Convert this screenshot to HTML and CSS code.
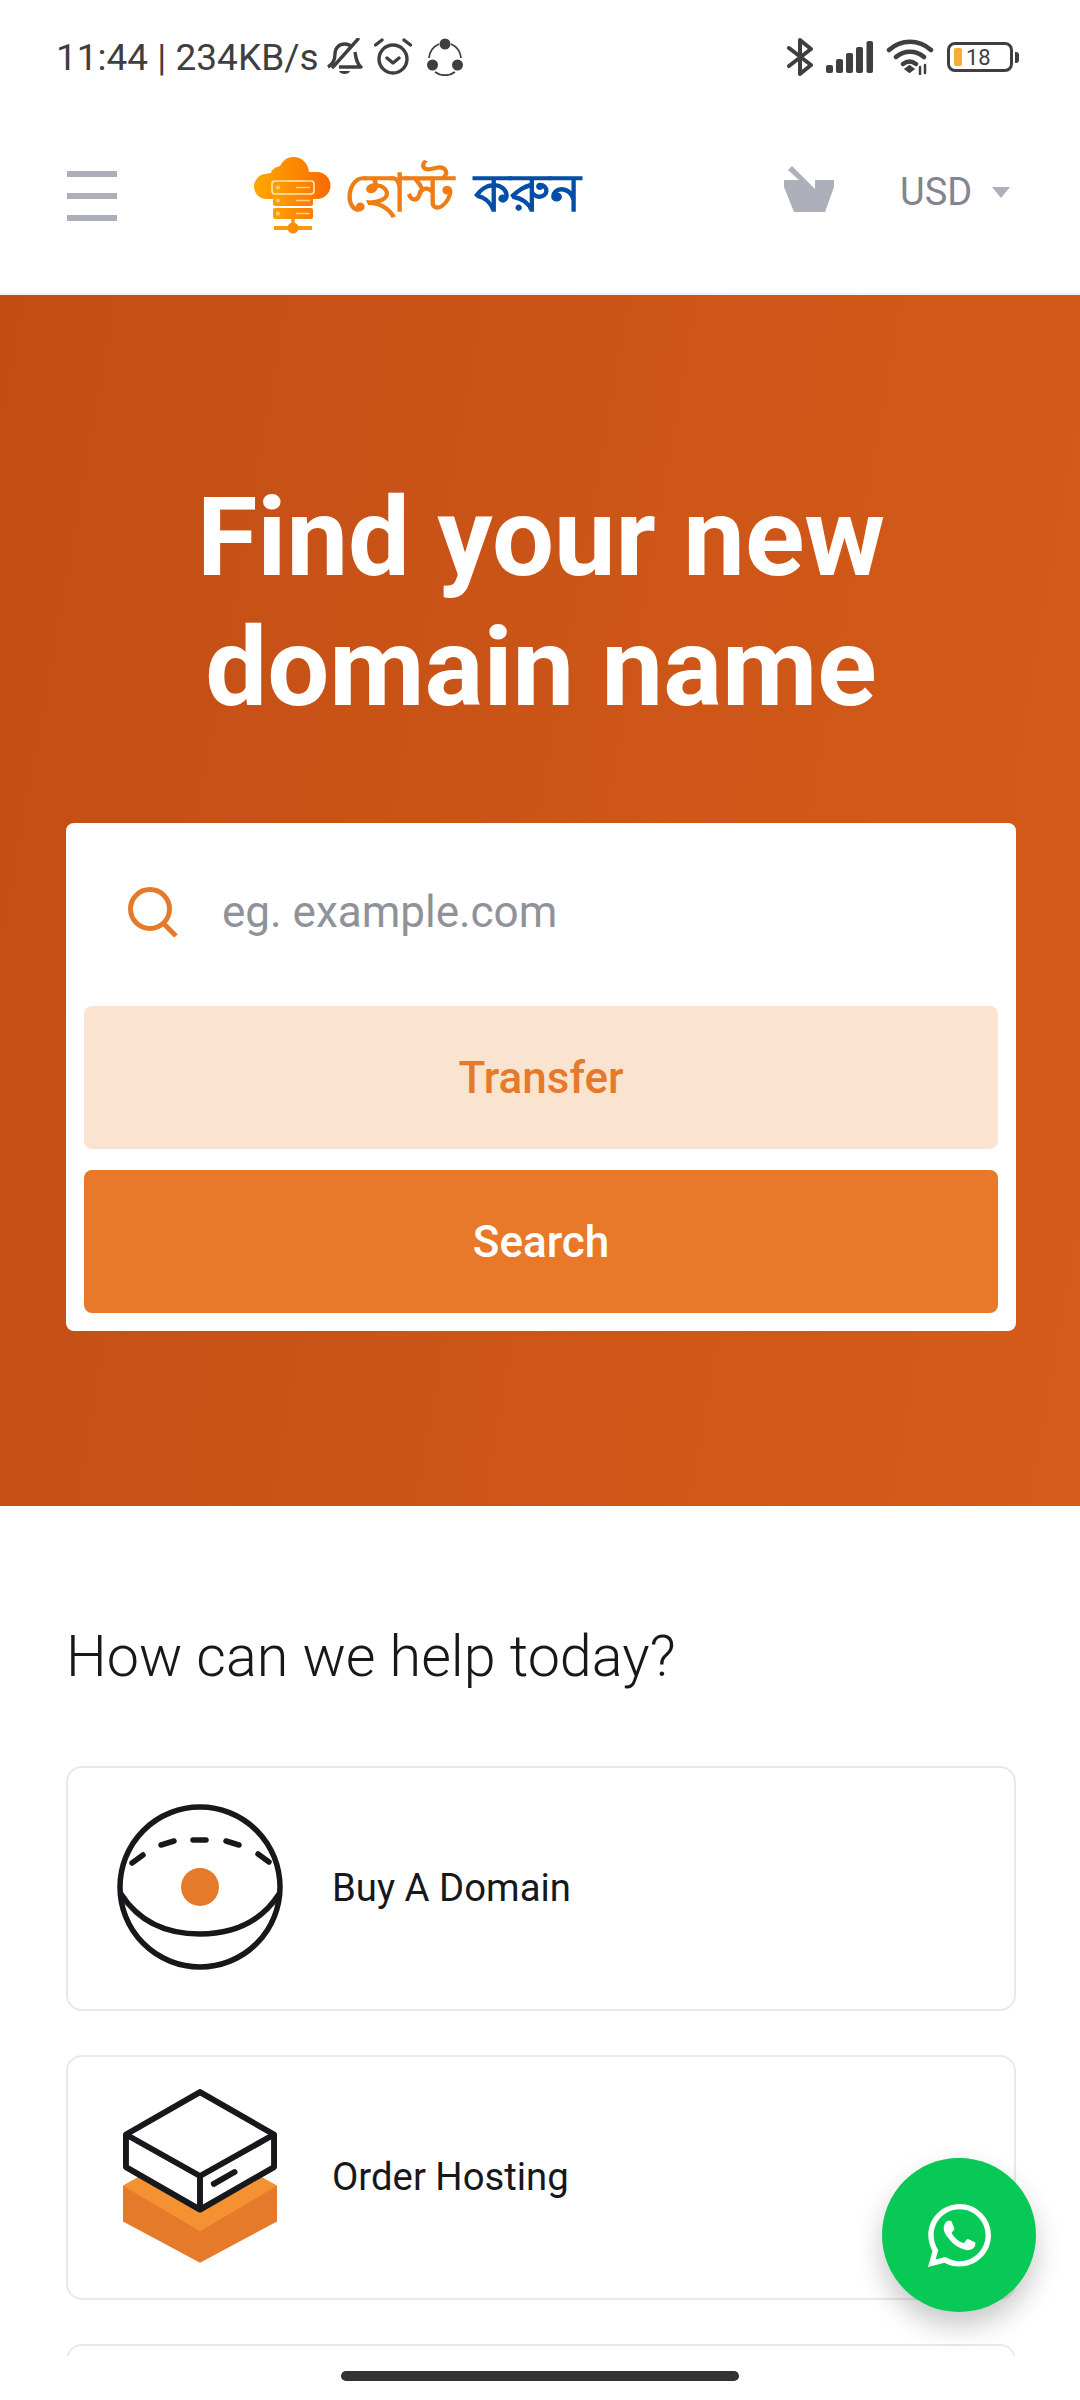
FILE: index.html
```html
<!DOCTYPE html>
<html lang="en">
<head>
    <meta charset="UTF-8">
    <meta name="viewport" content="width=device-width, initial-scale=1.0">
    <title>Find your new domain name</title>
    <link rel="stylesheet" href="styles.css">
</head>
<body>
    <div class="screen">
        <!-- Phone status bar -->
        <div class="status-bar">
            <div class="status-left">
                <span class="status-text">11:44 | 234KB/s</span>
                <svg width="37" height="38" viewBox="0 0 37 38" fill="none" stroke="#3f3f3f" stroke-width="3.4">
                    <path d="M2 29c5-3 7-7 7-13 0-6 4-10 10-10 3 0 5 1 7 3M29 14c1 7 2 12 6 15H13" stroke-linejoin="round"/>
                    <path d="M32 1 7 29" stroke-linecap="round"/>
                    <path d="M13 33h11c-1 4-10 4-11 0z" fill="#3f3f3f" stroke="none"/>
                </svg>
                <svg width="38" height="38" viewBox="0 0 38 38" fill="none" stroke="#3f3f3f" stroke-width="3.4">
                    <circle cx="19" cy="21" r="14"/>
                    <path d="m13 20 6 5 6-5M1.500 7 8 2M36.500 7 30 2" stroke-linecap="round" stroke-linejoin="round"/>
                </svg>
                <svg class="share-icon" width="38" height="38" viewBox="0 0 38 38" fill="none" stroke="#3f3f3f" stroke-width="1.800">
                    <path d="M25 6a17 17 0 0 1 10 14M13 6A17 17 0 0 0 3 20M9 34a17 17 0 0 0 20 0"/>
                    <circle cx="19" cy="6" r="5.500" fill="#3f3f3f" stroke="none"/>
                    <circle cx="6.500" cy="27" r="5.500" fill="#3f3f3f" stroke="none"/>
                    <circle cx="31.500" cy="27" r="5.500" fill="#3f3f3f" stroke="none"/>
                </svg>
            </div>
            <div class="status-right">
                <svg width="26" height="40" viewBox="0 0 26 40" fill="none" stroke="#3f3f3f" stroke-width="4" stroke-linejoin="round" stroke-linecap="round">
                    <path d="M2 11 24 28 13 37V3l11 9L2 29"/>
                </svg>
                <svg width="47" height="32" viewBox="0 0 47 32" fill="#3f3f3f">
                    <rect x="0" y="24" width="7" height="8" rx="2"/>
                    <rect x="10" y="18" width="7" height="14" rx="2"/>
                    <rect x="20" y="12" width="7" height="20" rx="2"/>
                    <rect x="30" y="6" width="7" height="26" rx="2"/>
                    <rect x="40.500" y="0" width="6.500" height="32" rx="2"/>
                </svg>
                <svg width="48" height="36" viewBox="0 0 46 36" fill="none" stroke="#3f3f3f" stroke-width="4.500" stroke-linecap="round">
                    <path d="M2 11c12-11 30-11 42 0M9 18c8-7 20-7 28 0M16 25c4-3 9-3 13 0"/>
                    <path d="M18.500 30l4-3 4 3-4 3z" fill="#3f3f3f" stroke-width="2"/>
                    <path d="M33 28v7M38 26v8" stroke-width="2.500"/>
                </svg>
                <div class="battery">
                    <div class="battery-body">
                        <span class="battery-level"></span>
                        <span class="battery-text">18</span>
                    </div>
                    <span class="battery-cap"></span>
                </div>
            </div>
        </div>

        <div class="page">
            <!-- Site header -->
            <header class="site-header">
                <div class="menu-button">
                    <span></span>
                    <span></span>
                    <span></span>
                </div>
                <div class="logo">
                    <svg width="80" height="80" viewBox="0 0 80 80">
                        <defs>
                            <linearGradient id="cloud-grad" x1="0" y1="0" x2="1" y2="0">
                                <stop offset="0" stop-color="#ffa800"/>
                                <stop offset="1" stop-color="#fb6a00"/>
                            </linearGradient>
                            <linearGradient id="rack-grad" x1="0" y1="0" x2="1" y2="0">
                                <stop offset="0" stop-color="#ffa000"/>
                                <stop offset="1" stop-color="#f97c0a"/>
                            </linearGradient>
                        </defs>
                        <path d="M13 43a12.500 12.500 0 0 1-1-25c1 0 3-1 5-1 1-4 5-6 9-7 3-6 8-9 13-9 9 0 15 6 16 15h8a13.500 13.500 0 0 1 0 27z" fill="url(#cloud-grad)"/>
                        <rect x="18" y="25" width="42" height="13" rx="3" fill="url(#rack-grad)" stroke="#ffe9b8" stroke-width="1.600"/>
                        <rect x="19" y="39" width="40" height="11" rx="2" fill="url(#rack-grad)"/>
                        <rect x="19" y="52" width="40" height="11" rx="2" fill="url(#rack-grad)"/>
                        <circle cx="24" cy="31.500" r="2" fill="#ffd27a"/>
                        <circle cx="24" cy="44.500" r="2" fill="#ffd27a"/>
                        <circle cx="24" cy="57.500" r="2" fill="#ffd27a"/>
                        <path d="M42 31.500h14M42 44.500h14M42 57.500h14" stroke="#ffd27a" stroke-width="1.500"/>
                        <path d="M39 63v9" stroke="#fb9a06" stroke-width="3.500"/>
                        <path d="M20 72h38" stroke="#fb9a06" stroke-width="4"/>
                        <circle cx="39" cy="72" r="5.500" fill="#fb8c06"/>
                    </svg>
                    <span class="logo-text"><span class="logo-orange">হোস্ট</span><span class="logo-blue">করুন</span></span>
                </div>
                <svg class="basket-icon" width="50" height="46" viewBox="0 0 50 46" fill="#adafba">
                    <path d="M8 0 31 23V14h19v7l-9 25H10L0 21v-7h15L4 4z"/>
                </svg>
                <div class="currency">
                    <span>USD</span>
                    <span class="caret"></span>
                </div>
            </header>

            <!-- Domain search -->
            <section class="hero">
                <h1>Find your new<br>domain name</h1>
                <form class="search-box">
                    <div class="search-row">
                        <svg width="50" height="50" viewBox="0 0 50 50" fill="none" stroke="#e67a2b" stroke-width="5">
                            <circle cx="22" cy="22" r="19.500"/>
                            <path d="m36 37 12 12"/>
                        </svg>
                        <span class="placeholder">eg. example.com</span>
                    </div>
                    <button type="button" class="btn btn-transfer">Transfer</button>
                    <button type="button" class="btn btn-search">Search</button>
                </form>
            </section>

            <!-- Help links -->
            <section class="help">
                <h2>How can we help today?</h2>
                <a class="help-card">
                    <span class="help-icon">
                        <svg width="166" height="166" viewBox="0 0 166 166" fill="none" stroke="#16181c" stroke-width="5.500" stroke-linecap="round">
                            <circle cx="83" cy="83" r="80"/>
                            <path d="M4 90c18 28 46 40 79 40s61-12 79-40"/>
                            <path d="M15 59l11-8M44 41l13-4M76 36h13M109 37l13 4M141 50l11 8"/>
                            <circle cx="83" cy="83" r="19" fill="#e67a2b" stroke="none"/>
                        </svg>
                    </span>
                    <span>Buy A Domain</span>
                </a>
                <a class="help-card">
                    <span class="help-icon">
                        <svg width="154" height="174" viewBox="0 0 156 176" fill="none">
                            <path d="M0 98 78 54l78 44v36L78 176 0 134z" fill="#e67a2b"/>
                            <path d="M0 98 78 54l78 44L78 144z" fill="#f49132"/>
                            <path d="M78 3 153 46v33L78 122 3 79V46z" fill="#fff" stroke="#16181c" stroke-width="6" stroke-linejoin="round"/>
                            <path d="M3 46 78 88l75-42M78 88v34" stroke="#16181c" stroke-width="6" stroke-linejoin="round"/>
                            <path d="M92 96l21-12" stroke="#16181c" stroke-width="6" stroke-linecap="round"/>
                        </svg>
                    </span>
                    <span>Order Hosting</span>
                </a>
                <a class="help-card"></a>
            </section>
        </div>

        <div class="nav-bar">
            <span class="home-indicator"></span>
        </div>

        <div class="whatsapp-button">
            <svg width="63" height="63" viewBox="0 0 24 24" fill="#fff">
                <path d="M17.470 14.380c-.3-.15-1.760-.87-2.030-.97-.27-.1-.47-.15-.67.15-.2.3-.77.97-.94 1.170-.17.2-.35.22-.65.07-.3-.15-1.260-.46-2.400-1.480-.89-.79-1.490-1.770-1.660-2.070-.17-.3-.02-.46.130-.61.130-.13.300-.35.450-.52.150-.17.200-.3.300-.5.100-.2.050-.37-.03-.52-.07-.15-.67-1.620-.92-2.220-.240-.580-.490-.500-.670-.510h-.570c-.2 0-.52.070-.79.370-.27.300-1.040 1.020-1.040 2.480s1.070 2.880 1.220 3.080c.15.200 2.100 3.200 5.080 4.490.71.310 1.270.490 1.700.630.710.230 1.360.190 1.870.120.570-.090 1.760-.720 2.010-1.420.250-.700.250-1.290.170-1.420-.070-.130-.270-.200-.570-.350z"/>
                <path d="M12.050 0C5.470 0 .11 5.340.11 11.910c0 2.100.55 4.150 1.600 5.950L0 24l6.300-1.650a11.900 11.900 0 0 0 5.750 1.470c6.570 0 11.930-5.340 11.940-11.910A11.840 11.840 0 0 0 20.500 3.500 11.880 11.880 0 0 0 12.050 0zm0 21.800a9.900 9.900 0 0 1-5.040-1.380l-.36-.21-3.740.98 1-3.640-.24-.37a9.850 9.850 0 0 1-1.510-5.270C2.160 6.450 6.600 2.020 12.050 2.020c2.640 0 5.120 1.030 6.990 2.900a9.800 9.800 0 0 1 2.890 6.990c0 5.460-4.440 9.890-9.880 9.890z"/>
            </svg>
        </div>
    </div>
</body>
</html>
```

FILE: styles.css
```css
/* Common styles */
html, body {
    margin: 0;
    padding: 0;
}

body {
    font-family: Roboto, "Liberation Sans", sans-serif;
    background-color: #fff;
    color: #16181c;
}

.screen {
    position: relative;
    width: 1080px;
    height: 2400px;
    overflow: hidden;
    display: flex;
    flex-direction: column;
    background-color: #fff;
}

/* Status bar */
.status-bar {
    height: 108px;
    flex-shrink: 0;
    padding: 6px 61px 0 56px;
    box-sizing: border-box;
    display: flex;
    justify-content: space-between;
    align-items: center;
}

.status-left {
    display: flex;
    align-items: center;
    gap: 11px;
}

.status-text {
    font-size: 37px;
    color: #3f3f3f;
    margin-right: -4px;
}

.share-icon {
    margin-left: 3px;
}

.status-right {
    display: flex;
    align-items: center;
    gap: 13px;
}

.battery {
    display: flex;
    align-items: center;
    gap: 2px;
}

.battery-body {
    width: 56px;
    height: 24px;
    border: 3px solid #3f3f3f;
    border-radius: 8px;
    display: flex;
    align-items: center;
    padding-left: 4px;
    gap: 4px;
}

.battery-level {
    width: 8px;
    height: 18px;
    background-color: #f4ad36;
    border-radius: 2px;
}

.battery-text {
    font-size: 22px;
    color: #3f3f3f;
}

.battery-cap {
    width: 4px;
    height: 11px;
    background-color: #3f3f3f;
    border-radius: 0 3px 3px 0;
}

/* Page area */
.page {
    height: 2248px;
    flex-shrink: 0;
    overflow: hidden;
}

/* Site header */
.site-header {
    height: 187px;
    box-sizing: border-box;
    padding: 0 0 9px 67px;
    display: flex;
    align-items: center;
    border-bottom: 2px solid #f2f2f2;
}

.menu-button {
    width: 50px;
    flex-shrink: 0;
    display: flex;
    flex-direction: column;
    gap: 16px;
}

.menu-button span {
    display: block;
    height: 6px;
    background-color: #adafba;
}

.logo {
    display: flex;
    align-items: center;
    gap: 10px;
    margin-left: 137px;
    width: 530px;
    flex-shrink: 0;
}

.logo-text {
    font-family: "Noto Sans", "DejaVu Sans", sans-serif;
    font-size: 52px;
    font-weight: 700;
    white-space: nowrap;
}

.logo-orange {
    color: #ef7d14;
    margin-right: 20px;
}

.logo-blue {
    color: #044ea8;
}

.basket-icon {
    flex-shrink: 0;
    margin-bottom: 14px;
}

.currency {
    margin-left: 66px;
    margin-bottom: 8px;
    display: flex;
    align-items: center;
    gap: 20px;
    font-size: 38px;
    color: #82858f;
}

.caret {
    width: 0;
    height: 0;
    border-left: 9px solid transparent;
    border-right: 9px solid transparent;
    border-top: 11px solid #adafba;
}

/* Hero */
.hero {
    height: 1211px;
    box-sizing: border-box;
    padding: 0 64px 0 66px;
    background: linear-gradient(100deg, #c24e15 0%, #d55c1a 100%);
    display: flex;
    flex-direction: column;
}

.hero h1 {
    margin: 0 0 80px;
    padding-top: 178px;
    height: 448px;
    box-sizing: border-box;
    font-size: 110px;
    line-height: 130px;
    font-weight: 700;
    color: #fff;
    text-align: center;
}

.search-box {
    height: 508px;
    box-sizing: border-box;
    padding: 0 18px 18px;
    background-color: #fff;
    border-radius: 8px;
    display: flex;
    flex-direction: column;
}

.search-row {
    height: 183px;
    box-sizing: border-box;
    flex-shrink: 0;
    display: flex;
    align-items: center;
    gap: 44px;
    padding: 0 0 5px 44px;
}

.placeholder {
    font-size: 44px;
    color: #8f9299;
}

.btn {
    height: 143px;
    flex-shrink: 0;
    border: none;
    border-radius: 8px;
    font-family: inherit;
    font-size: 44px;
    font-weight: 500;
}

.btn-transfer {
    background-color: #fbe4cf;
    color: #e67a2b;
    margin-bottom: 21px;
}

.btn-search {
    background-color: #e8792b;
    color: #fff;
}

/* Help links */
.help {
    padding: 0 64px 0 66px;
}

.help h2 {
    margin: 0 0 74px;
    padding-top: 115px;
    font-size: 57.500px;
    line-height: 71px;
    font-weight: 300;
    color: #16181c;
}

.help-card {
    height: 245px;
    box-sizing: border-box;
    margin-bottom: 44px;
    padding: 0 0 3px 48px;
    border: 2px solid #e9e9ec;
    border-radius: 16px;
    display: flex;
    align-items: center;
    gap: 48px;
    font-size: 38.300px;
    color: #16181c;
}

.help-icon {
    width: 168px;
    flex-shrink: 0;
    display: flex;
    justify-content: center;
}

/* Bottom nav bar */
.nav-bar {
    flex-grow: 1;
    display: flex;
    justify-content: center;
    align-items: flex-start;
    padding-top: 15px;
}

.home-indicator {
    width: 398px;
    height: 10px;
    border-radius: 5px;
    background-color: #333;
}

/* Floating chat button */
.whatsapp-button {
    position: absolute;
    left: 882px;
    top: 2158px;
    width: 154px;
    height: 154px;
    border-radius: 50%;
    background-color: #08c955;
    box-shadow: 0 14px 28px rgba(0, 0, 0, 0.22);
    display: flex;
    justify-content: center;
    align-items: center;
}
```
